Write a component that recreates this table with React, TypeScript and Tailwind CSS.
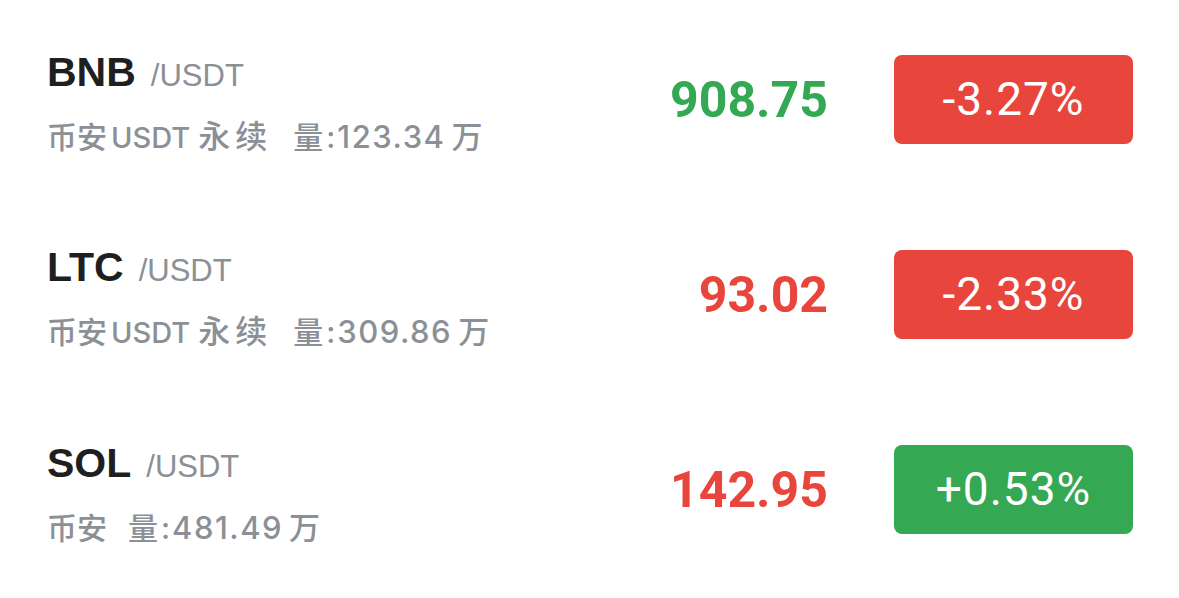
const rows = [
  { sym: 'BNB', exch: '币安', perp: true, vol: '123.34', price: '908.75', up: true, change: '-3.27%', changeUp: false },
  { sym: 'LTC', exch: '币安', perp: true, vol: '309.86', price: '93.02', up: false, change: '-2.33%', changeUp: false },
  { sym: 'SOL', exch: '币安', perp: false, vol: '481.49', price: '142.95', up: false, change: '+0.53%', changeUp: true },
]

export default function App() {
  return (
    <div className="w-[1179px] h-[598px] bg-white pt-[2px] pl-[47px] pr-[46px]">
      {rows.map((r) => (
        <div key={r.sym} className="flex h-[195px] items-center">
          <div className="flex-1 pt-[6px]">
            <div className="flex items-baseline gap-[15px] font-['Liberation_Sans',sans-serif]">
              <span className="text-[41px] font-semibold text-[#1f1f21] leading-none">{r.sym}</span>
              <span className="text-[31px] text-[#8b9096] leading-none">/USDT</span>
            </div>
            <div className="mt-[28px] flex items-baseline text-[30px] leading-none text-[#8b9096] font-['Inter','Noto_Sans_CJK_SC',sans-serif] font-medium">
              <span>{r.exch}</span>
              {r.perp && (
                <>
                  <span className="ml-[4px] text-[29px]">USDT</span>
                  <span className="ml-[8px] text-[32px] tracking-[5px]">永续</span>
                </>
              )}
              <span className="ml-[21px]">量</span>
              <span className="ml-[3px]">:</span>
              <span className="ml-[2px] text-[31px] tracking-[1.5px]">{r.vol}</span>
              <span className="ml-[6px] text-[31px]">万</span>
            </div>
          </div>
          <div
            className={`font-['Roboto',sans-serif] font-bold text-[50px] leading-none mr-[66px] ${
              r.up ? 'text-[#34a853]' : 'text-[#e8453c]'
            }`}
          >
            {r.price}
          </div>
          <div
            className={`flex h-[89px] w-[239px] items-center justify-center rounded-[8px] font-['Roboto',sans-serif] text-[46px] tracking-[1px] text-white ${
              r.changeUp ? 'bg-[#34a853]' : 'bg-[#e8453c]'
            }`}
          >
            {r.change}
          </div>
        </div>
      ))}
    </div>
  )
}
